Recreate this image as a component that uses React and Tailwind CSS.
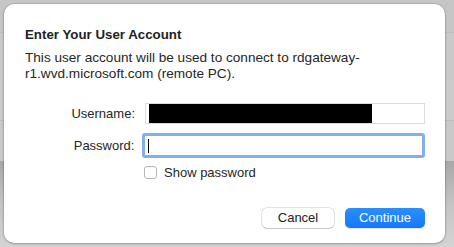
import React from 'react';

const font = { fontFamily: '"Liberation Sans", Arial, sans-serif' };

const Field = ({ label, children }) => (
  <div className="flex items-center">
    <div className="w-[120px] pr-[10px] text-right text-[13px] text-[#262626]">{label}</div>
    {children}
  </div>
);

export default function App() {
  return (
    <div className="relative h-[247px] w-[454px] overflow-hidden bg-[#c8c8c8]" style={font}>
      {/* window behind the sheet */}
      <div className="flex h-full flex-col">
        <div className="h-[33px] border-b border-[#bdbdbd] bg-[#c6c6c6]" />
        <div className="h-[48px] bg-[#c9c9c9]" />
        <div className="h-[40px] border-b border-[#bcbcbc] bg-[#cbcbcb]" />
        <div className="h-[40px] bg-[#c9c9c9]" />
        <div className="flex-1 bg-gradient-to-b from-[#a8a8a8] via-[#c4c4c4] to-[#d4d4d4]" />
      </div>

      {/* sheet dialog */}
      <div className="absolute left-[4px] top-[4px] flex h-[239px] w-[441px] flex-col rounded-[10px] bg-white pl-[21px] pr-[20px] pt-[23px] shadow-[0_0_0_0.5px_rgba(0,0,0,0.18),0_1px_3px_rgba(0,0,0,0.2)]">
        <div className="text-[13.3px] font-bold leading-[16px] text-[#222]">Enter Your User Account</div>
        <p className="mt-[7px] text-[13.6px] leading-[16px] text-[#262626]">
          This user account will be used to connect to rdgateway-
          <br />
          r1.wvd.microsoft.com (remote PC).
        </p>

        <div className="mt-[21px] flex flex-col">
          <Field label="Username:">
            <div className="flex h-[21px] w-[280px] items-end border border-[#dcdcdc] bg-white pl-[3px]">
              <div className="h-[19px] w-[223px] bg-black" />
            </div>
          </Field>
          <div className="h-[9px]" />
          <Field label="Password:">
            <div className="-ml-[2px] flex h-[25px] w-[284px] items-center rounded-[3px] border-[3px] border-[#82aef3] bg-white pl-[3px]">
              <div className="h-[14px] w-px bg-black" />
            </div>
          </Field>
          <label className="ml-[119px] mt-[5px] flex items-center gap-[7px]">
            <span className="h-[13px] w-[13px] rounded-[3px] border border-[#b8b8b8] bg-white shadow-[inset_0_1px_1px_rgba(0,0,0,0.04)]" />
            <span className="text-[13px] text-[#262626]">Show password</span>
          </label>
        </div>

        <div className="mt-auto mb-[15px] flex justify-end gap-[11px]">
          <button className="h-[20px] w-[72px] rounded-[5px] bg-white text-[13px] text-[#222] shadow-[0_0_0_0.5px_rgba(0,0,0,0.22),0_1px_1px_rgba(0,0,0,0.12)]">
            Cancel
          </button>
          <button className="h-[20px] w-[80px] rounded-[5px] bg-gradient-to-b from-[#2a8efc] to-[#1479f9] text-[13px] text-white shadow-[0_1px_1px_rgba(0,0,0,0.12)]">
            Continue
          </button>
        </div>
      </div>
    </div>
  );
}
